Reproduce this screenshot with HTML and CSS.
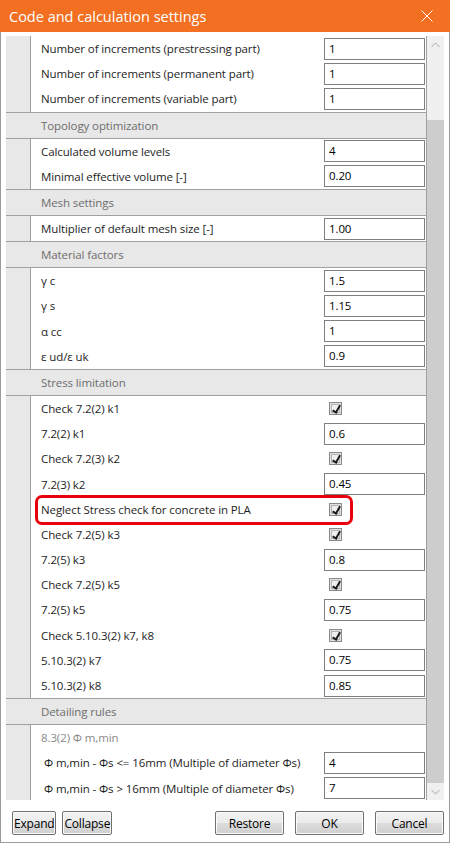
FILE: index.html
```html
<!DOCTYPE html>
<html lang="en">
<head>
  <meta charset="UTF-8" />
  <meta name="viewport" content="width=device-width, initial-scale=1" />
  <title>Code and calculation settings</title>
  <link rel="stylesheet" href="styles.css">
</head>
<body>
  <div class="dialog">
    <div class="titlebar">
      <span class="title">Code and calculation settings</span>
      <svg class="close" width="12" height="12" viewBox="0 0 12 12">
        <path d="M0.5 0.5 L11.5 11.5 M11.5 0.5 L0.5 11.5" stroke="#fff" stroke-width="1" fill="none" />
      </svg>
    </div>

    <div class="content">
      <div class="grid">
        <div class="row"><span class="label">Number of increments (prestressing part)</span><span class="value"><span class="field">1</span></span></div>
        <div class="row"><span class="label">Number of increments (permanent part)</span><span class="value"><span class="field">1</span></span></div>
        <div class="row"><span class="label">Number of increments (variable part)</span><span class="value"><span class="field">1</span></span></div>

        <div class="row section">Topology optimization</div>
        <div class="row"><span class="label">Calculated volume levels</span><span class="value"><span class="field">4</span></span></div>
        <div class="row"><span class="label">Minimal effective volume [-]</span><span class="value"><span class="field">0.20</span></span></div>

        <div class="row section">Mesh settings</div>
        <div class="row"><span class="label">Multiplier of default mesh size [-]</span><span class="value"><span class="field">1.00</span></span></div>

        <div class="row section">Material factors</div>
        <div class="row"><span class="label">γ c</span><span class="value"><span class="field">1.5</span></span></div>
        <div class="row"><span class="label">γ s</span><span class="value"><span class="field">1.15</span></span></div>
        <div class="row"><span class="label">α cc</span><span class="value"><span class="field">1</span></span></div>
        <div class="row"><span class="label">ε ud/ε uk</span><span class="value"><span class="field">0.9</span></span></div>

        <div class="row section">Stress limitation</div>
        <div class="row"><span class="label">Check 7.2(2) k1</span><span class="value"><span class="check"></span></span></div>
        <div class="row"><span class="label">7.2(2) k1</span><span class="value"><span class="field">0.6</span></span></div>
        <div class="row"><span class="label">Check 7.2(3) k2</span><span class="value"><span class="check"></span></span></div>
        <div class="row"><span class="label">7.2(3) k2</span><span class="value"><span class="field">0.45</span></span></div>
        <div class="row"><span class="label">Neglect Stress check for concrete in PLA</span><span class="value"><span class="check"></span></span></div>
        <div class="row"><span class="label">Check 7.2(5) k3</span><span class="value"><span class="check"></span></span></div>
        <div class="row"><span class="label">7.2(5) k3</span><span class="value"><span class="field">0.8</span></span></div>
        <div class="row"><span class="label">Check 7.2(5) k5</span><span class="value"><span class="check"></span></span></div>
        <div class="row"><span class="label">7.2(5) k5</span><span class="value"><span class="field">0.75</span></span></div>
        <div class="row"><span class="label">Check 5.10.3(2) k7, k8</span><span class="value"><span class="check"></span></span></div>
        <div class="row"><span class="label">5.10.3(2) k7</span><span class="value"><span class="field">0.75</span></span></div>
        <div class="row"><span class="label">5.10.3(2) k8</span><span class="value"><span class="field">0.85</span></span></div>

        <div class="row section">Detailing rules</div>
        <div class="row"><span class="label muted">8.3(2) Φ m,min</span></div>
        <div class="row"><span class="label sub">Φ m,min - Φs &lt;= 16mm (Multiple of diameter Φs)</span><span class="value"><span class="field">4</span></span></div>
        <div class="row"><span class="label sub">Φ m,min - Φs &gt; 16mm (Multiple of diameter Φs)</span><span class="value"><span class="field">7</span></span></div>

        <!-- red marker around the PLA row -->
        <div class="highlight"></div>
      </div>

      <div class="scrollbar">
        <div class="sb-btn">
          <svg width="9" height="6" viewBox="0 0 9 6"><path d="M0.5 5 L4.5 1 L8.5 5" stroke="#a6a6a6" fill="none" /></svg>
        </div>
        <div class="sb-gap"></div>
        <div class="sb-thumb"></div>
        <div class="sb-btn">
          <svg width="9" height="6" viewBox="0 0 9 6"><path d="M0.5 1 L4.5 5 L8.5 1" stroke="#a6a6a6" fill="none" /></svg>
        </div>
      </div>
    </div>

    <div class="footer">
      <div class="footer-left">
        <button class="btn">Expand</button>
        <button class="btn">Collapse</button>
      </div>
      <div class="footer-right">
        <button class="btn wide">Restore</button>
        <button class="btn wide">OK</button>
        <button class="btn wide">Cancel</button>
      </div>
    </div>
  </div>
</body>
</html>
```

FILE: styles.css
```css
* {
  margin: 0;
  padding: 0;
  box-sizing: border-box;
  font-family: 'Open Sans', 'Noto Sans', sans-serif;
}
body {
  background-color: white;
  width: 450px;
  height: 843px;
  overflow: hidden;
}
.dialog {
  width: 450px;
  height: 843px;
  border: 1px solid #9b9b9b;
  border-top: none;
  background-color: white;
  display: flex;
  flex-direction: column;
}
.titlebar {
  height: 32px;
  margin: 0 -1px;
  background-color: #f37022;
  color: white;
  display: flex;
  align-items: center;
  justify-content: space-between;
  padding: 0 17px 0 9px;
}
.title {
  font-size: 14.5px;
  font-weight: 400;
}
.content {
  height: 768px;
  display: flex;
  padding: 4px 5px 0 5px;
}
.grid {
  position: relative;
  width: 421px;
  height: 764px;
  overflow: hidden;
  border-right: 1px solid #a0a0a0;
  background: linear-gradient(to right, #e8e8e8 0, #e8e8e8 24px, #a0a0a0 24px, #a0a0a0 25px, white 25px);
}
.row {
  height: 25.2px;
  display: flex;
  align-items: center;
  padding-left: 35px;
  font-size: 11.5px;
  letter-spacing: -0.1px;
  color: #1e1e1e;
}
.row.section {
  height: 27px;
  background-color: #e8e8e8;
  border-top: 1px solid #a0a0a0;
  border-bottom: 1px solid #a0a0a0;
  color: #6d6d6d;
}
.label {
  flex: 1;
  white-space: nowrap;
}
.label.muted {
  color: #8a8a8a;
}
.label.sub {
  padding-left: 3px;
}
.value {
  width: 102px;
  display: flex;
  align-items: center;
}
.field {
  width: 101px;
  height: 22px;
  border: 1px solid #7f7f7f;
  padding-left: 4px;
  line-height: 20px;
  color: black;
}
/* checked box: grey frame, light inner bevel, dark tick */
.check {
  width: 13px;
  height: 13px;
  margin-left: 5px;
  border: 1px solid #8a8a8a;
  box-shadow: inset 0 0 0 1px #e0e0e0, inset 0 0 0 2px #b5b5b5;
  background: linear-gradient(#e9e9e9, #f8f8f8);
  position: relative;
}
.check::after {
  content: "";
  position: absolute;
  left: 4px;
  top: 1px;
  width: 3px;
  height: 7px;
  border-right: 2px solid #1a1a1a;
  border-bottom: 2px solid #1a1a1a;
  transform: rotate(30deg);
}
.highlight {
  position: absolute;
  left: 29px;
  top: 459px;
  width: 318px;
  height: 30px;
  border: 3px solid #e8000d;
  border-radius: 7px;
}
.scrollbar {
  width: 17px;
  height: 764px;
  background-color: #f0f0f0;
  display: flex;
  flex-direction: column;
}
.sb-btn {
  height: 17px;
  display: flex;
  align-items: center;
  justify-content: center;
}
.sb-gap {
  height: 67px;
}
.sb-thumb {
  flex: 1;
  background-color: #cdcdcd;
}
.footer {
  flex: 1;
  display: flex;
  justify-content: space-between;
  align-items: flex-start;
  padding: 11px 5px 0 11px;
}
.footer-left,
.footer-right {
  display: flex;
}
.footer-left {
  gap: 6px;
}
.footer-right {
  gap: 11px;
}
.btn {
  height: 24px;
  padding: 0 1px;
  border: 1px solid #707070;
  border-radius: 2px;
  background: linear-gradient(#f2f2f2 0%, #ebebeb 50%, #dddddd 50%, #cfcfcf 100%);
  box-shadow: inset 0 0 0 1px #fbfbfb;
  font-size: 12px;
  letter-spacing: -0.2px;
  color: black;
}
.btn.wide {
  width: 69px;
}
```
